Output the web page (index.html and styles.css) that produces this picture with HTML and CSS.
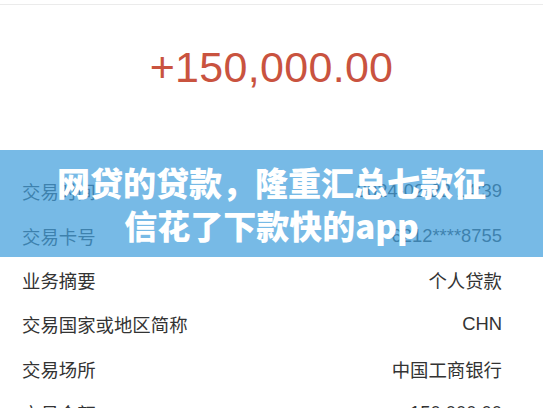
FILE: index.html
```html
<!DOCTYPE html>
<html lang="zh-CN">
<head>
  <meta charset="UTF-8" />
  <meta name="viewport" content="width=device-width, initial-scale=1.0"/>
  <title>交易详情</title>
  <link rel="stylesheet" href="styles.css">
</head>
<body>
  <div class="detail">
    <div class="amount">+150,000.00</div>
    <div class="rows">
      <div class="row"><span>交易时间</span><span>2024-02-22 14:39</span></div>
      <div class="row"><span>交易卡号</span><span>6212****8755</span></div>
      <div class="row"><span>业务摘要</span><span>个人贷款</span></div>
      <div class="row"><span>交易国家或地区简称</span><span>CHN</span></div>
      <div class="row"><span>交易场所</span><span>中国工商银行</span></div>
      <div class="row"><span>交易金额</span><span>150,000.00</span></div>
    </div>

    <div class="banner">
      <h1>网贷的贷款，隆重汇总七款征<br>信花了下款快的app</h1>
    </div>
  </div>
</body>
</html>
```

FILE: styles.css
```css
body {
  margin: 0;
  background: #FFFFFF;
  font-family: 'Liberation Sans', 'Noto Sans CJK SC', sans-serif;
  overflow: hidden;
}

.detail {
  position: relative;
  margin-top: 4px;
  border-top: 1px solid #EBEBEB;
}

.amount {
  height: 164px;
  display: flex;
  align-items: center;
  justify-content: center;
  padding-bottom: 40px;
  box-sizing: border-box;
  font-size: 43px;
  color: #C9533F;
  letter-spacing: 0.3px;
}

.row {
  height: 44.4px;
  display: flex;
  align-items: center;
  justify-content: space-between;
  padding: 0 41px 0 22px;
  font-size: 18.4px;
  color: #333333;
}

.banner {
  position: absolute;
  left: 0;
  right: 0;
  top: 145px;
  height: 107px;
  display: flex;
  align-items: center;
  justify-content: center;
  background: rgba(66, 159, 220, 0.72);
}

.banner h1 {
  margin: 0;
  text-align: center;
  font-family: 'Noto Sans CJK SC', sans-serif;
  font-size: 33px;
  font-weight: 900;
  line-height: 43px;
  color: #FFFFFF;
}
```
